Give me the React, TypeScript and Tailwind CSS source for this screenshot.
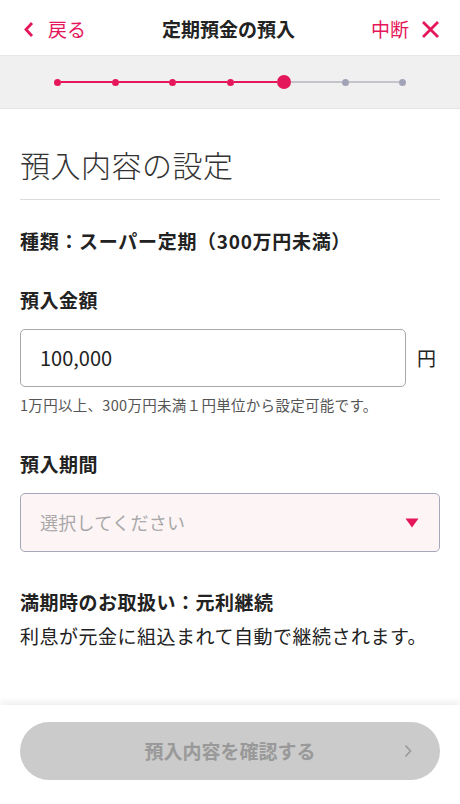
const RED = "text-[#e5175a]";

function StepBar() {
  const steps = [0, 1, 2, 3, 4, 5, 6];
  const current = 4;
  return (
    <div className="flex h-[53px] items-center justify-center border-b border-[#e4e4e4] bg-[#f0f0f0]">
      <div className="flex w-[352px] items-center">
        {steps.map((s) => (
          <div key={s} className={`flex items-center ${s === 0 ? "" : "flex-1"}`}>
            {s > 0 && (
              <div className={s <= current ? "h-[2px] flex-1 bg-[#e5175a]" : "h-[2px] flex-1 bg-[#c4c4cc]"} />
            )}
            {s === current ? (
              <div className="h-[14px] w-[14px] shrink-0 rounded-full bg-[#e5175a]" />
            ) : s < current ? (
              <div className="h-[7px] w-[7px] shrink-0 rounded-full bg-[#e5175a]" />
            ) : (
              <div className="h-[7px] w-[7px] shrink-0 rounded-full bg-[#a2a3b6]" />
            )}
          </div>
        ))}
      </div>
    </div>
  );
}

export default function App() {
  return (
    <div
      className="flex h-[804px] w-[460px] flex-col bg-white text-[#222]"
      style={{ fontFamily: '"Noto Sans CJK JP", "Noto Sans", sans-serif' }}
    >
      {/* header */}
      <div className="flex h-[56px] shrink-0 items-center justify-between border-b border-[#e6e6e6] pl-[23px] pr-[20px] pt-[3px]">
        <div className={`flex items-center gap-[14px] ${RED}`}>
          <svg width="11" height="17" viewBox="0 0 11 17">
            <path d="M9 2 L3 8.5 L9 15" fill="none" stroke="#e5175a" strokeWidth="2.8" />
          </svg>
          <span className="text-[19px] leading-[24px]">戻る</span>
        </div>
        <div className="text-[19px] font-bold leading-[24px]">定期預金の預入</div>
        <div className={`flex items-center gap-[12px] ${RED}`}>
          <span className="text-[19px] leading-[24px]">中断</span>
          <svg width="19" height="19" viewBox="0 0 19 19">
            <path d="M2 2 L17 17 M17 2 L2 17" stroke="#e5175a" strokeWidth="2.8" />
          </svg>
        </div>
      </div>

      <StepBar />

      {/* body */}
      <div className="flex-1 px-[20px]">
        <h1 className="mt-[35px] border-b border-[#dcdcdc] pb-[15px] text-[30px] font-light leading-[40px] tracking-[0.5px] text-[#333]">
          預入内容の設定
        </h1>

        <div className="mt-[27px] text-[19px] font-bold leading-[28px] tracking-[0.7px]">種類：スーパー定期（300万円未満）</div>

        <div className="mt-[31px] text-[19px] font-bold leading-[28px] tracking-[0.5px]">預入金額</div>
        <div className="mt-[15px] flex items-center gap-[11px]">
          <div className="flex h-[58px] w-[386px] items-center rounded-[5px] border border-[#a9a9a9] px-[19px] text-[20px]">
            100,000
          </div>
          <span className="text-[19px]">円</span>
        </div>
        <div className="mt-[8px] text-[14.5px] leading-[20px] tracking-[0.3px] text-[#555]">
          1万円以上、300万円未満１円単位から設定可能です。
        </div>

        <div className="mt-[35px] text-[19px] font-bold leading-[28px] tracking-[0.5px]">預入期間</div>
        <div className="mt-[15px] flex h-[59px] items-center justify-between rounded-[5px] border border-[#a5a8b8] bg-[#fdf4f5] pl-[19px] pr-[20px]">
          <span className="text-[18px] tracking-[0.3px] text-[#a8a8a8]">選択してください</span>
          <svg width="14" height="10" viewBox="0 0 14 10">
            <path d="M0.5 0.5 H13.5 L7 9.5 Z" fill="#e5175a" />
          </svg>
        </div>

        <div className="mt-[36px] text-[19px] font-bold leading-[28px] tracking-[0.5px]">満期時のお取扱い：元利継続</div>
        <div className="mt-[6px] text-[19px] leading-[28px] tracking-[0.5px]">利息が元金に組込まれて自動で継続されます。</div>
      </div>

      {/* footer */}
      <div className="shrink-0 bg-white px-[20px] pb-[24px] pt-[17px] shadow-[0_-4px_6px_rgba(0,0,0,0.06)]">
        <div className="relative flex h-[58px] items-center justify-center rounded-full bg-[#cbcbcb]">
          <span className="text-[19px] font-bold text-[#999]">預入内容を確認する</span>
          <svg className="absolute right-[28px]" width="8" height="14" viewBox="0 0 8 14">
            <path d="M1.5 1.5 L6.5 7 L1.5 12.5" fill="none" stroke="#999" strokeWidth="1.6" />
          </svg>
        </div>
      </div>
    </div>
  );
}
